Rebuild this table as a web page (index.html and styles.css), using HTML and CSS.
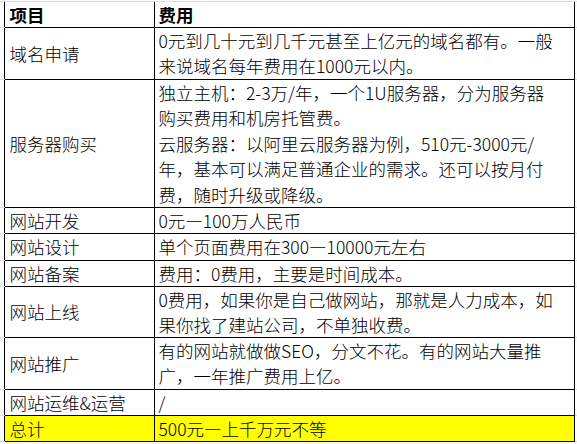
FILE: index.html
```html
<!DOCTYPE html>
<html lang="zh-CN">
<head>
<meta charset="utf-8">
<link rel="stylesheet" href="styles.css">
</head>
<body>
<table class="sheet">
  <colgroup>
    <col class="c-pad-l">
    <col class="c-item">
    <col class="c-cost">
    <col class="c-pad-r">
  </colgroup>
  <tr class="row-top"><td class="pad"></td><td class="pad"></td><td class="pad"></td><td class="pad"></td></tr>
  <tr class="head">
    <td class="pad"></td><td class="cell">项目</td><td class="cell">费用</td><td class="pad"></td>
  </tr>
  <tr>
    <td class="pad"></td><td class="cell">域名申请</td>
    <td class="cell">0元到几十元到几千元甚至上亿元的域名都有。一般<br>来说域名每年费用在1000元以内。</td><td class="pad"></td>
  </tr>
  <tr>
    <td class="pad"></td><td class="cell">服务器购买</td>
    <td class="cell five">独立主机：2-3万/年，一个1U服务器，分为服务器<br>购买费用和机房托管费。<br>云服务器：以阿里云服务器为例，510元-3000元/<br>年，基本可以满足普通企业的需求。还可以按月付<br>费，随时升级或降级。</td><td class="pad"></td>
  </tr>
  <tr>
    <td class="pad"></td><td class="cell">网站开发</td><td class="cell">0元—100万人民币</td><td class="pad"></td>
  </tr>
  <tr>
    <td class="pad"></td><td class="cell">网站设计</td><td class="cell">单个页面费用在300—10000元左右</td><td class="pad"></td>
  </tr>
  <tr>
    <td class="pad"></td><td class="cell">网站备案</td><td class="cell">费用：0费用，主要是时间成本。</td><td class="pad"></td>
  </tr>
  <tr>
    <td class="pad"></td><td class="cell">网站上线</td>
    <td class="cell">0费用，如果你是自己做网站，那就是人力成本，如<br>果你找了建站公司，不单独收费。</td><td class="pad"></td>
  </tr>
  <tr>
    <td class="pad"></td><td class="cell">网站推广</td>
    <td class="cell">有的网站就做做SEO，分文不花。有的网站大量推<br>广，一年推广费用上亿。</td><td class="pad"></td>
  </tr>
  <tr>
    <td class="pad"></td><td class="cell">网站运维&amp;运营</td><td class="cell">/</td><td class="pad"></td>
  </tr>
  <tr class="total">
    <td class="pad"></td><td class="cell">总计</td><td class="cell">500元—上千万元不等</td><td class="pad"></td>
  </tr>
  <tr class="row-bottom"><td class="pad"></td><td class="pad"></td><td class="pad"></td><td class="pad"></td></tr>
</table>
</body>
</html>
```

FILE: styles.css
```css
html, body {
  margin: 0;
  padding: 0;
  background: #fff;
}

.sheet {
  border-collapse: collapse;
  table-layout: fixed;
  width: 578px;
  font-family: "Noto Sans CJK SC", "Noto Sans", sans-serif;
  font-size: 17.5px;
  font-weight: 300;
  color: #000;
}

.c-pad-l { width: 4px; }
.c-item { width: 150px; }
.c-cost { width: 420px; }
.c-pad-r { width: 4px; }

.row-top .pad {
  height: 1px;
  padding: 0;
  border-bottom: 1px solid #d9d9d9;
}

.row-bottom .pad {
  height: 4px;
  padding: 0;
  border-top: 1px solid #d9d9d9;
}

.pad {
  padding: 0;
  border-bottom: 1px solid #d9d9d9;
}

.pad:last-child {
  border-right: 1px solid #d9d9d9;
}

.cell {
  border: 1px solid #000;
  padding: 0 0 0 4px;
  line-height: 25.2px;
  white-space: nowrap;
  vertical-align: middle;
  overflow: hidden;
}

.cell:nth-child(2) {
  padding-left: 5px;
}

.cell.five {
  line-height: 25.5px;
}

.head .cell {
  font-weight: bold;
}

.total .cell {
  background: #ffff00;
}
```
